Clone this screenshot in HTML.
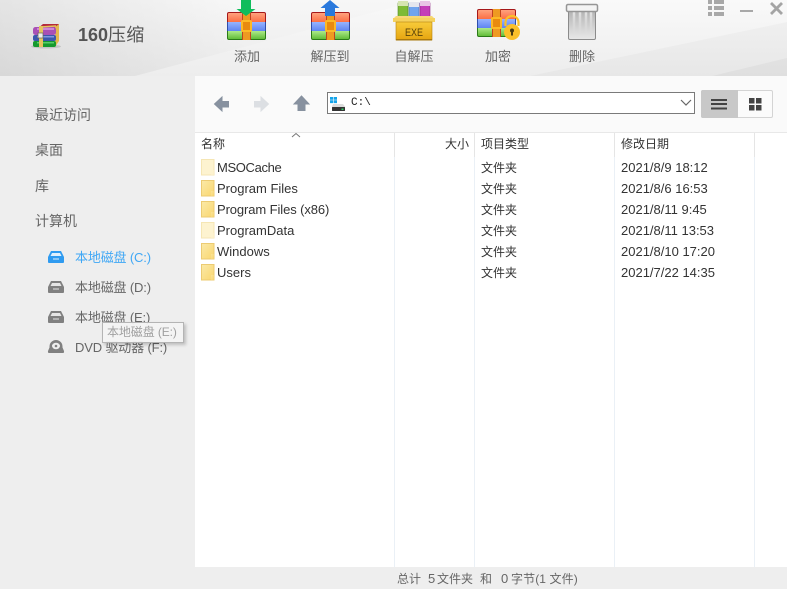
<!DOCTYPE html>
<html><head><meta charset="utf-8">
<style>
html,body{margin:0;padding:0}
body{width:787px;height:589px;position:relative;overflow:hidden;background:#fff;font-family:"Liberation Sans","Noto Sans CJK SC",sans-serif;font-size:13px;color:#333}
.t{position:absolute;white-space:nowrap;line-height:18px;height:18px}
.s{color:#666;font-size:14px}
.d{color:#666;font-size:13px;letter-spacing:-.15px}
.r{color:#333}
.c{color:#333;font-size:12px}
.ab{position:absolute}
.tool{color:#666;font-size:13px;text-align:center;width:70px}
</style></head>
<body>
<svg class="ab" style="left:0;top:0" width="787" height="76" viewBox="0 0 787 76">
<defs>
<linearGradient id="bg2" x1="0" y1="0" x2="0" y2="1"><stop offset="0" stop-color="#f9f9f9"/><stop offset="1" stop-color="#ededed"/></linearGradient>
<linearGradient id="dk" gradientUnits="userSpaceOnUse" x1="0" y1="76" x2="230" y2="0"><stop offset="0" stop-color="#000" stop-opacity=".09"/><stop offset="1" stop-color="#000" stop-opacity=".01"/></linearGradient>
<linearGradient id="r" x1="0" y1="0" x2="0" y2="1"><stop offset="0" stop-color="#ffa27e"/><stop offset="1" stop-color="#fb6f45"/></linearGradient>
<linearGradient id="b" x1="0" y1="0" x2="0" y2="1"><stop offset="0" stop-color="#96b4ff"/><stop offset="1" stop-color="#5f84f2"/></linearGradient>
<linearGradient id="g" x1="0" y1="0" x2="0" y2="1"><stop offset="0" stop-color="#aeea88"/><stop offset="1" stop-color="#62bd3a"/></linearGradient>
<linearGradient id="y" x1="0" y1="0" x2="0" y2="1"><stop offset="0" stop-color="#f8cb3a"/><stop offset="1" stop-color="#e6a510"/></linearGradient>
<linearGradient id="tr" x1="0" y1="0" x2="0" y2="1"><stop offset="0" stop-color="#b0b0b0"/><stop offset="1" stop-color="#e8e8e8"/></linearGradient>
<linearGradient id="ts" x1="0" y1="0" x2="0" y2="1"><stop offset="0" stop-color="#e4e4e4"/><stop offset="1" stop-color="#e4e4e4" stop-opacity="0"/></linearGradient>
<g id="arc">
<rect x=".5" y=".5" width="38" height="27" rx="1.500" fill="#666"/>
<rect x="1" y="1" width="37" height="9" fill="url(#r)"/>
<rect x="1" y="10" width="37" height="9" fill="url(#b)"/>
<rect x="1" y="19" width="37" height="8" fill="url(#g)"/>
<path d="M.5 10V2q0-1.500 1.500-1.500h35q1.500 0 1.500 1.500V10" fill="none" stroke="#a5181a"/>
<path d="M.5 10v9M38.500 10v9" stroke="#2f4eaa" fill="none"/>
<path d="M.5 19v7q0 1.500 1.500 1.500h35q1.500 0 1.500-1.500V19" fill="none" stroke="#2b7a17"/>
<rect x="15" y="0" width="9" height="28" fill="#ee9a22"/>
<rect x="15" y="0" width="1" height="28" fill="#c1431f"/>
<rect x="23" y="0" width="1" height="28" fill="#c1431f"/>
<rect x="15" y="9" width="9" height="10" rx="1" fill="#e98a10" stroke="#fdb925" stroke-width="2"/>
</g>
</defs>
<rect width="787" height="76" fill="url(#bg2)"/>
<path d="M0 0H420L135 76H0Z" fill="url(#dk)"/>
<path d="M530 76 787 22V76Z" fill="#000" opacity=".025"/>
<path d="M712 76 787 58V76Z" fill="#000" opacity=".03"/>

<!-- app logo -->
<ellipse cx="46" cy="46.500" rx="15" ry="2" fill="#c4c4c4"/>
<path d="M38 28 43 24H59L57 28Z" fill="#b52a3c"/>
<path d="M55 27 59 24V41L55 47Z" fill="#e3b84e"/>
<rect x="33" y="27" width="23" height="8" rx="2.500" fill="#a850b5"/>
<rect x="37" y="28" width="17" height="2" fill="#cf86d6"/>
<rect x="33" y="35" width="23" height="6" rx="2" fill="#3a57ad"/>
<rect x="37" y="36" width="17" height="1.500" fill="#7f97de"/>
<rect x="33" y="41" width="23" height="6" rx="2" fill="#169a2e"/>
<rect x="37" y="42" width="17" height="1.500" fill="#58cc68"/>
<rect x="39" y="26" width="4" height="21" fill="#e5c45f"/>
<rect x="38" y="33" width="5" height="5" fill="#eee" stroke="#665" stroke-width=".7"/>
<path d="M41 27 56 26" stroke="#e5c45f" stroke-width="1.500"/>

<!-- add -->
<use href="#arc" x="227" y="12"/>
<path d="M241 0h10v9h4.500l-9.500 7-9.500-7h4.500Z" fill="#10bd5c"/>
<!-- extract -->
<use href="#arc" x="311" y="12"/>
<path d="M330 0l9.500 8h-4.500v8h-10V8h-4.500Z" fill="#2a79dc"/>
<!-- exe -->
<rect x="398" y="3" width="10" height="15" fill="#7dbb35" stroke="#55861f" stroke-width=".6"/>
<rect x="409" y="3" width="10" height="15" fill="#70a4ee" stroke="#4773b5" stroke-width=".6"/>
<rect x="420" y="3" width="10" height="15" fill="#c43fb8" stroke="#8c2382" stroke-width=".6"/>
<rect x="398" y="1" width="10" height="5" fill="#d5e5b0"/>
<rect x="409" y="2" width="10" height="5" fill="#e4e6ee"/>
<rect x="420" y="1" width="10" height="5" fill="#e8c5e5"/>
<path d="M393 19l3-3h36l3 3Z" fill="#f6d777"/>
<rect x="393" y="18" width="42" height="4" fill="#f5d25e"/>
<rect x="396" y="22" width="36" height="18" fill="url(#y)" stroke="#b58312" stroke-width=".6"/>
<rect x="396" y="39" width="36" height="1.500" fill="#a9790d"/>
<text x="405" y="36" font-family="Liberation Sans" font-size="11" textLength="18" lengthAdjust="spacingAndGlyphs" fill="#59430a">EXE</text>
<!-- encrypt -->
<use href="#arc" x="477" y="9"/>
<path d="M505.500 26v-3.500a6.500 6.500 0 0 1 13 0V26" fill="none" stroke="#fbc02a" stroke-width="2.200"/>
<circle cx="512" cy="32" r="8" fill="#fbc02a"/>
<circle cx="512" cy="30.500" r="2" fill="#4a3a10"/>
<rect x="511" y="31" width="2" height="4.500" fill="#4a3a10"/>
<!-- trash -->
<rect x="568.500" y="9" width="27" height="30.500" rx="1.500" fill="url(#tr)" stroke="#8b8b8b"/>
<path d="M574 12v23M580 12v23M586 12v23M591 12v23" stroke="url(#ts)" stroke-width="2.500"/>
<rect x="566.500" y="4.500" width="31" height="7" rx="1.500" fill="#f4f4f4" stroke="#969696" stroke-width="1.500"/>

<!-- window controls -->
<g fill="#a8a8a8">
<rect x="708" y="0" width="4" height="4"/><rect x="714" y="0" width="10" height="4"/>
<rect x="708" y="6" width="4" height="4"/><rect x="714" y="6" width="10" height="4"/>
<rect x="708" y="12" width="4" height="4"/><rect x="714" y="12" width="10" height="4"/>
<rect x="740" y="10" width="13" height="2"/>
</g>
<path d="M771 3l11 11M782 3l-11 11" stroke="#a4a4a4" stroke-width="2.800"/>
</svg>

<div class="t" style="left:78px;top:23px;font-size:18px;line-height:24px;height:24px;font-weight:bold;color:#555"><span>160</span><span style="font-weight:normal;color:#555;letter-spacing:.2px">压缩</span></div>
<div class="t tool" style="left:212px;top:48px">添加</div>
<div class="t tool" style="left:295px;top:48px">解压到</div>
<div class="t tool" style="left:379px;top:48px">自解压</div>
<div class="t tool" style="left:463px;top:48px">加密</div>
<div class="t tool" style="left:547px;top:48px">删除</div>

<!-- sidebar -->
<div class="ab" style="left:0;top:76px;width:195px;height:513px;background:#eeeeee"></div>
<div class="t s" style="left:35px;top:106px">最近访问</div>
<div class="t s" style="left:35px;top:141px">桌面</div>
<div class="t s" style="left:35px;top:177px">库</div>
<div class="t s" style="left:35px;top:212px">计算机</div>

<svg class="ab" style="left:46px;top:248px" width="20" height="110" viewBox="0 0 20 110">
<path d="M5 3h10l3 6v5q0 1-1 1H3q-1 0-1-1V9Z" fill="#2f9bf0"/>
<path d="M6 5h8l1.500 3h-11ZM7 10.500h6v1H7Z" fill="#dff0fd"/>
<path d="M5 33h10l3 6v5q0 1-1 1H3q-1 0-1-1V39Z" fill="#808080"/>
<path d="M6 35h8l1.500 3h-11ZM7 40.500h6v1H7Z" fill="#e6e6e6"/>
<path d="M5 63h10l3 6v5q0 1-1 1H3q-1 0-1-1V69Z" fill="#808080"/>
<path d="M6 65h8l1.500 3h-11ZM7 70.500h6v1H7Z" fill="#e6e6e6"/>
<path d="M10 92a6.500 6.500 0 0 1 6.500 6.500v1L18 103q.3 2-1 2H3q-1.300 0-1-2l1.500-3.500v-1A6.500 6.500 0 0 1 10 92Z" fill="#808080"/>
<ellipse cx="10" cy="98" rx="4" ry="3.200" fill="#eee"/><circle cx="10" cy="98" r="1.300" fill="#808080"/>
</svg>
<div class="t d" style="left:75px;top:249px;color:#3fa7f5">本地磁盘 (C:)</div>
<div class="t d" style="left:75px;top:279px">本地磁盘 (D:)</div>
<div class="t d" style="left:75px;top:309px">本地磁盘 (E:)</div>
<div class="t d" style="left:75px;top:339px">DVD 驱动器 (F:)</div>
<div class="ab" style="left:102px;top:322px;width:80px;height:19px;background:rgba(244,244,244,.92);border:1px solid #b4b4b4;box-shadow:2px 2px 3px rgba(0,0,0,.2)"></div>
<div class="t" style="left:107px;top:323px;color:#a0a0a0;font-size:12px;letter-spacing:-.1px">本地磁盘 (E:)</div>

<!-- toolbar -->
<div class="ab" style="left:195px;top:76px;width:592px;height:56px;background:#fafafa;border-bottom:1px solid #e8e8e8"></div>
<svg class="ab" style="left:205px;top:88px" width="110" height="30" viewBox="0 0 110 30">
<path d="M9.500 16l7.500-7v4.500h6.500v5.500H17v4Z" fill="#87919f" stroke="#87919f" stroke-width="1"/>
<path d="M63.500 16l-7.500-7v4.500h-6.500v5.500H56v4Z" fill="#dcdfe3" stroke="#dcdfe3" stroke-width="1"/>
<path d="M96.500 8l7.500 8h-4v6.500h-7V16h-4Z" fill="#87919f" stroke="#87919f" stroke-width="1"/>
</svg>
<div class="ab" style="left:327px;top:92px;width:366px;height:20px;background:#fff;border:1px solid #7a7a7a"></div>
<svg class="ab" style="left:330px;top:96px" width="18" height="17" viewBox="0 0 18 17">
<path d="M0 1h3.200v2.800H0zM3.800 1H7v2.800H3.800zM0 4.300h3.200v2.800H0zM3.800 4.300H7v2.800H3.800z" fill="#14a4ea"/>
<path d="M3 8h10l2 2.500v1H2v-1Z" fill="#dcdcdc"/><rect x="2" y="11" width="13" height="4" rx=".5" fill="#333"/><rect x="11.500" y="12.500" width="2" height="1.500" fill="#3c6"/>
</svg>
<div class="t" style="left:351px;top:94px;font-size:11px;font-family:'Liberation Mono',monospace;color:#222;letter-spacing:0">C:\</div>
<svg class="ab" style="left:680px;top:99px" width="12" height="8" viewBox="0 0 12 8"><path d="M1 1l5 5 5-5" fill="none" stroke="#666" stroke-width="1.200"/></svg>

<div class="ab" style="left:701px;top:90px;width:70px;height:26px;border:1px solid #d4d4d4;border-radius:2px;background:#fbfbfb"></div>
<div class="ab" style="left:701px;top:90px;width:37px;height:28px;background:#c8c8c8;border-radius:2px 0 0 2px"></div>
<svg class="ab" style="left:701px;top:90px" width="72" height="28" viewBox="0 0 72 28">
<g fill="#444"><rect x="10" y="9" width="16" height="2"/><rect x="10" y="13" width="16" height="2"/><rect x="10" y="17.500" width="16" height="2"/>
<rect x="48" y="8" width="5.500" height="5.500"/><rect x="55" y="8" width="5.500" height="5.500"/><rect x="48" y="15" width="5.500" height="5.500"/><rect x="55" y="15" width="5.500" height="5.500"/></g>
</svg>

<!-- columns -->
<div class="ab" style="left:394px;top:133px;width:1px;height:434px;background:#eaf0f6"></div>
<div class="ab" style="left:474px;top:133px;width:1px;height:434px;background:#eaf0f6"></div>
<div class="ab" style="left:614px;top:133px;width:1px;height:434px;background:#eaf0f6"></div>
<div class="ab" style="left:754px;top:133px;width:1px;height:434px;background:#eaf0f6"></div>
<div class="ab" style="left:394px;top:133px;width:1px;height:24px;background:#e5e5e5"></div>
<div class="ab" style="left:474px;top:133px;width:1px;height:24px;background:#e5e5e5"></div>
<div class="ab" style="left:614px;top:133px;width:1px;height:24px;background:#e5e5e5"></div>
<div class="ab" style="left:754px;top:133px;width:1px;height:24px;background:#e5e5e5"></div>
<svg class="ab" style="left:291px;top:132px" width="10" height="6" viewBox="0 0 10 6"><path d="M1 5l4-3.500 4 3.500" fill="none" stroke="#777"/></svg>

<div class="t c" style="left:201px;top:135px">名称</div>
<div class="t c" style="left:445px;top:135px">大小</div>
<div class="t c" style="left:481px;top:135px">项目类型</div>
<div class="t c" style="left:621px;top:135px">修改日期</div>

<!-- folders -->
<svg class="ab" style="left:200px;top:158px" width="16" height="126" viewBox="0 0 16 126">
<defs><linearGradient id="f" x1="0" y1="0" x2="1" y2="1"><stop offset="0" stop-color="#fbe9a8"/><stop offset="1" stop-color="#f9d66e"/></linearGradient>
<g id="fo"><path d="M1.500 1.500h12.500v15.500H1.500Z"/><path d="M11 12h3v5h-3Z" stroke="none" fill-opacity=".6"/></g></defs>
<g fill="url(#f)" stroke="#eccb72">
<use href="#fo" y="21"/><use href="#fo" y="42"/><use href="#fo" y="84"/><use href="#fo" y="105"/>
</g>
<g fill="#fdf3d0" stroke="#f5e6b4">
<use href="#fo" y="0"/><use href="#fo" y="63"/>
</g>
</svg>

<div class="t r" style="left:217px;top:159px;letter-spacing:-.35px">MSOCache</div>
<div class="t r" style="left:217px;top:180px">Program Files</div>
<div class="t r" style="left:217px;top:201px;letter-spacing:-.1px">Program Files (x86)</div>
<div class="t r" style="left:217px;top:222px">ProgramData</div>
<div class="t r" style="left:217px;top:243px">Windows</div>
<div class="t r" style="left:217px;top:264px">Users</div>

<div class="t c" style="left:481px;top:159px">文件夹</div>
<div class="t c" style="left:481px;top:180px">文件夹</div>
<div class="t c" style="left:481px;top:201px">文件夹</div>
<div class="t c" style="left:481px;top:222px">文件夹</div>
<div class="t c" style="left:481px;top:243px">文件夹</div>
<div class="t c" style="left:481px;top:264px">文件夹</div>

<div class="t r" style="left:621px;top:159px">2021/8/9 18:12</div>
<div class="t r" style="left:621px;top:180px">2021/8/6 16:53</div>
<div class="t r" style="left:621px;top:201px">2021/8/11 9:45</div>
<div class="t r" style="left:621px;top:222px">2021/8/11 13:53</div>
<div class="t r" style="left:621px;top:243px">2021/8/10 17:20</div>
<div class="t r" style="left:621px;top:264px">2021/7/22 14:35</div>

<!-- status -->
<div class="ab" style="left:195px;top:567px;width:592px;height:22px;background:#eeeeee"></div>
<div class="t c" style="left:397px;top:570px;color:#666">总计</div>
<div class="t c" style="left:428px;top:570px;color:#666;font-size:13px">5</div>
<div class="t c" style="left:437px;top:570px;color:#666">文件夹</div>
<div class="t c" style="left:480px;top:570px;color:#666">和</div>
<div class="t c" style="left:501px;top:570px;color:#666;font-size:13px">0</div>
<div class="t c" style="left:511px;top:570px;color:#666;letter-spacing:.1px">字节(1 文件)</div>
</body></html>
